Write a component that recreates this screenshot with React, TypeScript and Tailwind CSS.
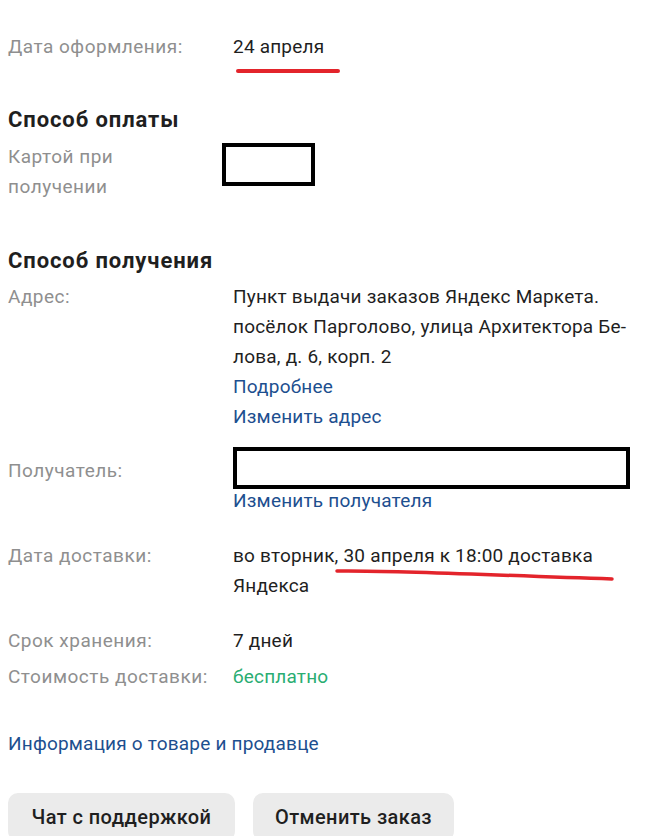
const Row = ({ label, children, className = "", labelClass = "" }: { label: string; children: React.ReactNode; className?: string; labelClass?: string }) => (
  <div className={"flex " + className}>
    <div className={"w-[225px] shrink-0 tracking-[0.5px] text-[#8f8f8f] " + labelClass}>{label}</div>
    <div className="flex-1 min-w-0">{children}</div>
  </div>
);

const App = () => {
  return (
    <div className="w-[660px] h-[836px] overflow-hidden bg-white px-2 pt-[32px] text-[19px] leading-[30px] tracking-[0.2px] text-[#1f1f1f] font-['Roboto',sans-serif]">
      <Row label="Дата оформления:">
        <div>24 апреля</div>
        <div className="ml-[3px] mt-[7px] h-[4px] w-[104px] rounded-full bg-[#e3242b]"></div>
      </Row>

      <div className="mt-[32px] text-[22px] font-bold tracking-[0.9px]">Способ оплаты</div>
      <div className="mt-[7px] flex">
        <div className="w-[160px] tracking-[0.5px] text-[#8f8f8f]">Картой при получении</div>
        <div className="ml-[54px] mt-[1px] h-[43px] w-[93px] border-4 border-black"></div>
      </div>

      <div className="mt-[44px] text-[22px] font-bold tracking-[0.9px]">Способ получения</div>
      <Row label="Адрес:" className="mt-[6px]">
        <div className="pr-[14px]">Пункт выдачи заказов Яндекс Маркета. посёлок Парголово, улица Архитектора Бе-лова, д. 6, корп. 2</div>
        <div className="text-[#1d4f8f]">Подробнее</div>
        <div className="text-[#1d4f8f]">Изменить адрес</div>
      </Row>

      <Row label="Получатель:" className="mt-[15px]" labelClass="pt-[9px]">
        <div className="h-[42px] w-[397px] border-4 border-black"></div>
        <div className="mt-[1px] leading-[22px] text-[#1d4f8f]">Изменить получателя</div>
      </Row>

      <Row label="Дата доставки:" className="mt-[29px]">
        <div className="relative">
          <div>во вторник, 30 апреля к 18:00 доставка Яндекса</div>
          <svg className="absolute left-[102px] top-[26px]" width="280" height="16" viewBox="0 0 280 16">
            <path d="M2 4 C60 3 150 8 277 12" stroke="#e3242b" strokeWidth="3.5" fill="none" strokeLinecap="round" />
          </svg>
        </div>
      </Row>

      <Row label="Срок хранения:" className="mt-[25px]">
        <div>7 дней</div>
      </Row>
      <Row label="Стоимость доставки:" className="mt-[6px]">
        <div className="text-[#2aad72]">бесплатно</div>
      </Row>

      <div className="mt-[37px] text-[#1d4f8f]">Информация о товаре и продавце</div>

      <div className="mt-[34px] flex gap-[18px]">
        <button className="h-[48px] w-[227px] rounded-[10px] bg-[#ebebeb] text-[20px] font-medium tracking-[0.4px]">Чат с поддержкой</button>
        <button className="h-[48px] w-[201px] rounded-[10px] bg-[#ebebeb] text-[20px] font-medium tracking-[0.4px]">Отменить заказ</button>
      </div>
    </div>
  );
};

export default App;
